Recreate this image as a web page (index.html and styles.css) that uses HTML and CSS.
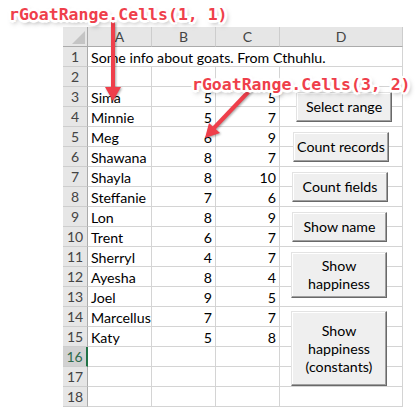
FILE: index.html
```html
<!DOCTYPE html>
<html lang="en">
<head>
<meta charset="UTF-8">
<meta name="viewport" content="width=device-width, initial-scale=1.0">
<title>Goat range</title>
<link rel="stylesheet" href="styles.css">
</head>
<body>
<div class="page">
    <div class="sheet">
        <div class="corner"></div>
        <div class="colhead">A</div>
        <div class="colhead">B</div>
        <div class="colhead">C</div>
        <div class="colhead">D</div>

        <div class="rowhead">1</div>
        <div class="cell wide">Some info about goats. From Cthuhlu.</div>

        <div class="rowhead">2</div>
        <div class="cell"></div><div class="cell"></div><div class="cell"></div><div class="cell"></div>

        <div class="rowhead">3</div>
        <div class="cell">Sima</div><div class="cell num">5</div><div class="cell num">5</div><div class="cell"></div>
        <div class="rowhead">4</div>
        <div class="cell">Minnie</div><div class="cell num">5</div><div class="cell num">7</div><div class="cell"></div>
        <div class="rowhead">5</div>
        <div class="cell">Meg</div><div class="cell num">6</div><div class="cell num">9</div><div class="cell"></div>
        <div class="rowhead">6</div>
        <div class="cell">Shawana</div><div class="cell num">8</div><div class="cell num">7</div><div class="cell"></div>
        <div class="rowhead">7</div>
        <div class="cell">Shayla</div><div class="cell num">8</div><div class="cell num">10</div><div class="cell"></div>
        <div class="rowhead">8</div>
        <div class="cell">Steffanie</div><div class="cell num">7</div><div class="cell num">6</div><div class="cell"></div>
        <div class="rowhead">9</div>
        <div class="cell">Lon</div><div class="cell num">8</div><div class="cell num">9</div><div class="cell"></div>
        <div class="rowhead">10</div>
        <div class="cell">Trent</div><div class="cell num">6</div><div class="cell num">7</div><div class="cell"></div>
        <div class="rowhead">11</div>
        <div class="cell">Sherryl</div><div class="cell num">4</div><div class="cell num">7</div><div class="cell"></div>
        <div class="rowhead">12</div>
        <div class="cell">Ayesha</div><div class="cell num">8</div><div class="cell num">4</div><div class="cell"></div>
        <div class="rowhead">13</div>
        <div class="cell">Joel</div><div class="cell num">9</div><div class="cell num">5</div><div class="cell"></div>
        <div class="rowhead">14</div>
        <div class="cell">Marcellus</div><div class="cell num">7</div><div class="cell num">7</div><div class="cell"></div>
        <div class="rowhead">15</div>
        <div class="cell">Katy</div><div class="cell num">5</div><div class="cell num">8</div><div class="cell"></div>

        <div class="rowhead selected">16</div>
        <div class="cell"></div><div class="cell"></div><div class="cell"></div><div class="cell"></div>
        <div class="rowhead">17</div>
        <div class="cell"></div><div class="cell"></div><div class="cell"></div><div class="cell"></div>
        <div class="rowhead">18</div>
        <div class="cell"></div><div class="cell"></div><div class="cell"></div><div class="cell"></div>
    </div>

    <!-- form buttons float over column D -->
    <button class="xlbtn btn-select">Select range</button>
    <button class="xlbtn btn-records">Count records</button>
    <button class="xlbtn btn-fields">Count fields</button>
    <button class="xlbtn btn-name">Show name</button>
    <button class="xlbtn btn-happy">Show<br>happiness</button>
    <button class="xlbtn btn-const">Show<br>happiness<br>(constants)</button>

    <!-- annotations -->
    <svg class="arrows" width="418" height="407" viewBox="0 0 418 407">
        <line x1="113" y1="22" x2="113" y2="89" stroke="#ef3f4b" stroke-width="4"/>
        <polygon points="105,87 121,87 113,101" fill="#ef3f4b"/>
        <line x1="252" y1="88" x2="214" y2="128" stroke="#ef3f4b" stroke-width="4"/>
        <polygon points="220,133 209,123 205,138" fill="#ef3f4b"/>
    </svg>
    <div class="note note-one">rGoatRange.Cells(1, 1)</div>
    <div class="note note-two">rGoatRange.Cells(3, 2)</div>
</div>
</body>
</html>
```

FILE: styles.css
```css
body {
    margin: 0;
    background: #fff;
    font-family: Lato, "Liberation Sans", sans-serif;
}

.page {
    position: relative;
    width: 418px;
    height: 407px;
    overflow: hidden;
}

/*------------------------ Sheet grid ----------------------- */
.sheet {
    display: grid;
    grid-template-columns: 25px 64px 64px 64px 123px;
    grid-auto-rows: 20px;
    margin: 27px 0 0 63px;
    width: 340px;
    font-size: 14.2px;
    color: #000;
}

.cell {
    box-sizing: border-box;
    border-right: 1px solid #d4d4d4;
    border-bottom: 1px solid #d4d4d4;
    padding: 1px 3px 0;
    line-height: 20px;
    white-space: nowrap;
}

.cell.wide {
    grid-column: span 4;
}

.cell.num {
    text-align: right;
}

.corner,
.colhead,
.rowhead {
    box-sizing: border-box;
    background-color: #e6e6e6;
    color: #444;
    line-height: 20px;
    text-align: center;
    font-size: 14px;
}

.corner {
    position: relative;
    border-right: 1px solid #ababab;
    border-bottom: 1px solid #ababab;
}

.corner::after {
    content: '';
    position: absolute;
    right: 2px;
    bottom: 2px;
    width: 0;
    height: 0;
    border-left: 13px solid transparent;
    border-bottom: 13px solid #c4c4c4;
}

.colhead {
    border-right: 1px solid #cdcdcd;
    border-bottom: 1px solid #ababab;
}

.rowhead {
    border-right: 1px solid #ababab;
    border-bottom: 1px solid #cdcdcd;
}

.rowhead.selected {
    background-color: #d2d2d2;
    color: #2e6b4c;
    border-right: 2px solid #217346;
}

/*------------------------ Form buttons ----------------------- */
.xlbtn {
    position: absolute;
    box-sizing: border-box;
    width: 96px;
    height: 30px;
    padding: 0;
    border: 1px solid;
    border-color: #e3e3e3 #696969 #696969 #e3e3e3;
    box-shadow: inset -1px -1px 0 #a0a0a0, inset 1px 1px 0 #fff;
    background-color: #efefef;
    font-family: Lato, "Liberation Sans", sans-serif;
    font-size: 14.2px;
    line-height: 18px;
    color: #000;
    text-align: center;
}

.btn-select  { left: 296px; top: 92px; }
.btn-records { left: 293px; top: 132px; }
.btn-fields  { left: 292px; top: 172px; }
.btn-name    { left: 292px; top: 212px; width: 95px; }
.btn-happy   { left: 291px; top: 252px; height: 46px; }
.btn-const   { left: 291px; top: 311px; height: 75px; }

/*------------------------ Annotations ----------------------- */
.arrows {
    position: absolute;
    left: 0;
    top: 0;
    pointer-events: none;
    filter: drop-shadow(1px 1px 1px rgba(0, 0, 0, .35));
}

.note {
    position: absolute;
    font-family: "DejaVu Sans Mono", "Liberation Mono", monospace;
    font-weight: bold;
    font-size: 16.5px;
    line-height: 20px;
    color: #ef3f4b;
    white-space: nowrap;
    text-shadow:
        -2px -2px 0 #fff, 2px -2px 0 #fff, -2px 2px 0 #fff, 2px 2px 0 #fff,
        0 -2px 0 #fff, 0 2px 0 #fff, -2px 0 0 #fff, 2px 0 0 #fff,
        0 -3px 1px #fff, 0 3px 1px #fff, -3px 0 1px #fff, 3px 0 1px #fff,
        2px 3px 5px rgba(0, 0, 0, .5);
}

.note-one {
    left: 9px;
    top: 5px;
}

.note-two {
    left: 192px;
    top: 75px;
}
```
